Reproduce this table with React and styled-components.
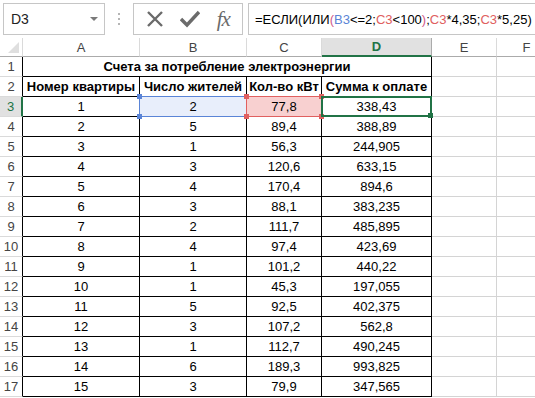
import React from "react";
import styled, { createGlobalStyle } from "styled-components";

const GlobalStyle = createGlobalStyle`
  html, body {
    margin: 0;
    padding: 0;
    background: #ffffff;
  }
  body {
    font-family: "Liberation Sans", Arial, sans-serif;
    overflow: hidden;
  }
`;

const Page = styled.div`
  width: 535px;
  height: 398px;
  overflow: hidden;
  background: #ffffff;
`;

const Bar = styled.div`
  display: flex;
  align-items: center;
  height: 38px;
  padding: 3px 0 3px 3px;
  box-sizing: border-box;
`;

const Box = styled.div`
  height: 32px;
  box-sizing: border-box;
  border: 1px solid #c6c6c6;
  display: flex;
  align-items: center;
  background: #fff;
`;

const NameBox = styled(Box)`
  width: 102px;
  padding: 0 6px 0 7px;
  justify-content: space-between;
  font-size: 14px;
  color: #222;
`;

const Arrow = styled.span`
  width: 0;
  height: 0;
  border-left: 4px solid transparent;
  border-right: 4px solid transparent;
  border-top: 4px solid #7a7a7a;
`;

const Dots = styled.div`
  width: 28px;
  display: flex;
  flex-direction: column;
  align-items: center;
  gap: 3px;
  span {
    width: 2px;
    height: 2px;
    background: #b5b5b5;
  }
`;

const FxBox = styled(Box)`
  width: 110px;
  justify-content: space-around;
  padding: 0 4px;
`;

const Fx = styled.span`
  font-family: "Liberation Serif", "DejaVu Serif", serif;
  font-style: italic;
  font-size: 21px;
  color: #6b6b6b;
  letter-spacing: -1px;
`;

const FormulaBox = styled(Box)`
  flex: 1;
  margin-left: 5px;
  border-right: none;
  padding-left: 6px;
  font-size: 13px;
  white-space: nowrap;
  overflow: hidden;
  color: #000;
`;

const Ref = styled.span`
  color: ${(p) => p.$c};
`;

const Grid = styled.div`
  display: grid;
  grid-template-columns: 23px 117px 107px 75px 110px 65px 60px;
  grid-template-rows: 19px repeat(17, 20px);
`;

const ColHead = styled.div`
  box-sizing: border-box;
  display: flex;
  align-items: center;
  justify-content: center;
  font-size: 13px;
  color: ${(p) => (p.$active ? "#217346" : "#444444")};
  font-weight: ${(p) => (p.$active ? "bold" : "normal")};
  background: ${(p) => (p.$active ? "#e1e1e1" : "#ffffff")};
  border-right: 1px solid ${(p) => (p.$active ? "#ababab" : "#dadada")};
  border-bottom: ${(p) => (p.$active ? "2px solid #217346" : "1px solid #ababab")};
  position: relative;
`;

const Corner = styled(ColHead)`
  &::after {
    content: "";
    position: absolute;
    right: 3px;
    bottom: 3px;
    width: 0;
    height: 0;
    border-left: 11px solid transparent;
    border-bottom: 11px solid #dfdfdf;
  }
`;

const RowHead = styled.div`
  box-sizing: border-box;
  display: flex;
  align-items: center;
  justify-content: center;
  font-size: 13px;
  color: ${(p) => (p.$active ? "#217346" : "#444444")};
  background: ${(p) => (p.$active ? "#e1e1e1" : "#ffffff")};
  border-bottom: 1px solid #dadada;
  border-right: ${(p) =>
    p.$active ? "2px solid #217346" : p.$edge ? "1px solid #000" : "1px solid #ababab"};
`;

const Cell = styled.div`
  position: relative;
  box-sizing: border-box;
  display: flex;
  align-items: center;
  justify-content: center;
  font-size: 13px;
  color: #000;
  font-weight: ${(p) => (p.$bold ? "bold" : "normal")};
  white-space: nowrap;
  background: ${(p) => p.$fill || "transparent"};
  border-right: 1px solid ${(p) => (p.$edge ? "#000" : "#d4d4d4")};
  border-bottom: 1px solid ${(p) => (p.$under ? "#000" : "#d4d4d4")};
  grid-column: ${(p) => (p.$span ? `span ${p.$span}` : "auto")};
`;

const Frame = styled.div`
  position: absolute;
  left: -1px;
  top: -1px;
  right: -1px;
  bottom: -1px;
  border: ${(p) => p.$w}px solid ${(p) => p.$c};
  pointer-events: none;
  z-index: 2;
`;

const Handle = styled.span`
  position: absolute;
  width: 5px;
  height: 5px;
  background: ${(p) => p.$c};
  ${(p) => (p.$y === "t" ? "top: -3px;" : "bottom: -3px;")}
  ${(p) => (p.$x === "l" ? "left: -3px;" : "right: -3px;")}
`;

const rows = [
  ["1", "2", "77,8", "338,43"],
  ["2", "5", "89,4", "388,89"],
  ["3", "1", "56,3", "244,905"],
  ["4", "3", "120,6", "633,15"],
  ["5", "4", "170,4", "894,6"],
  ["6", "3", "88,1", "383,235"],
  ["7", "2", "111,7", "485,895"],
  ["8", "4", "97,4", "423,69"],
  ["9", "1", "101,2", "440,22"],
  ["10", "1", "45,3", "197,055"],
  ["11", "5", "92,5", "402,375"],
  ["12", "3", "107,2", "562,8"],
  ["13", "1", "112,7", "490,245"],
  ["14", "6", "189,3", "993,825"],
  ["15", "3", "79,9", "347,565"],
];

const heads = ["Номер квартиры", "Число жителей", "Кол-во кВт", "Сумма к оплате"];

const BLUE = "#5a84d6";
const RED = "#e06060";
const GREEN = "#217346";

const RangeFrame = ({ c }) => (
  <Frame $w={1} $c={c}>
    <Handle $c={c} $y="t" $x="l" />
    <Handle $c={c} $y="t" $x="r" />
    <Handle $c={c} $y="b" $x="l" />
    <Handle $c={c} $y="b" $x="r" />
  </Frame>
);

const ActiveFrame = () => (
  <Frame $w={2} $c={GREEN}>
    <Handle $c={GREEN} $y="b" $x="r" />
  </Frame>
);

const App = () => {
  return (
    <Page>
      <GlobalStyle />
      <Bar>
        <NameBox>
          D3
          <Arrow />
        </NameBox>
        <Dots>
          <span />
          <span />
          <span />
        </Dots>
        <FxBox>
          <svg width="18" height="18" viewBox="0 0 18 18">
            <path d="M2 2 L16 16 M16 2 L2 16" stroke="#6b6b6b" strokeWidth="2.4" />
          </svg>
          <svg width="20" height="18" viewBox="0 0 20 18">
            <path d="M1 9 L7 15 L19 2" stroke="#6b6b6b" strokeWidth="3.4" fill="none" />
          </svg>
          <Fx>fx</Fx>
        </FxBox>
        <FormulaBox>
          =ЕСЛИ(ИЛИ<Ref $c="#d05a8a">(</Ref>
          <Ref $c={BLUE}>B3</Ref>&lt;=2;<Ref $c={RED}>C3</Ref>&lt;100
          <Ref $c="#d05a8a">)</Ref>;<Ref $c={RED}>C3</Ref>*4,35;
          <Ref $c={RED}>C3</Ref>*5,25)
        </FormulaBox>
      </Bar>
      <Grid>
        <Corner />
        {["A", "B", "C", "D", "E", "F"].map((l) => (
          <ColHead key={l} $active={l === "D"}>
            {l}
          </ColHead>
        ))}

        <RowHead $edge>1</RowHead>
        <Cell $bold $span={4} $edge $under>
          Счета за потребление электроэнергии
        </Cell>
        <Cell />
        <Cell />

        <RowHead $edge>2</RowHead>
        {heads.map((h) => (
          <Cell key={h} $bold $edge $under>
            {h}
          </Cell>
        ))}
        <Cell />
        <Cell />

        {rows.map((r, i) => {
          const n = i + 3;
          const active = n === 3;
          return (
            <React.Fragment key={n}>
              <RowHead $edge $active={active}>
                {n}
              </RowHead>
              <Cell $edge $under>
                {r[0]}
              </Cell>
              <Cell $edge $under $fill={active ? "#e8eefb" : null}>
                {r[1]}
                {active && <RangeFrame c={BLUE} />}
              </Cell>
              <Cell $edge $under $fill={active ? "#f8d0d0" : null}>
                {r[2]}
                {active && <RangeFrame c={RED} />}
              </Cell>
              <Cell $edge $under>
                {r[3]}
                {active && <ActiveFrame />}
              </Cell>
              <Cell />
              <Cell />
            </React.Fragment>
          );
        })}
      </Grid>
    </Page>
  );
};

export default App;
